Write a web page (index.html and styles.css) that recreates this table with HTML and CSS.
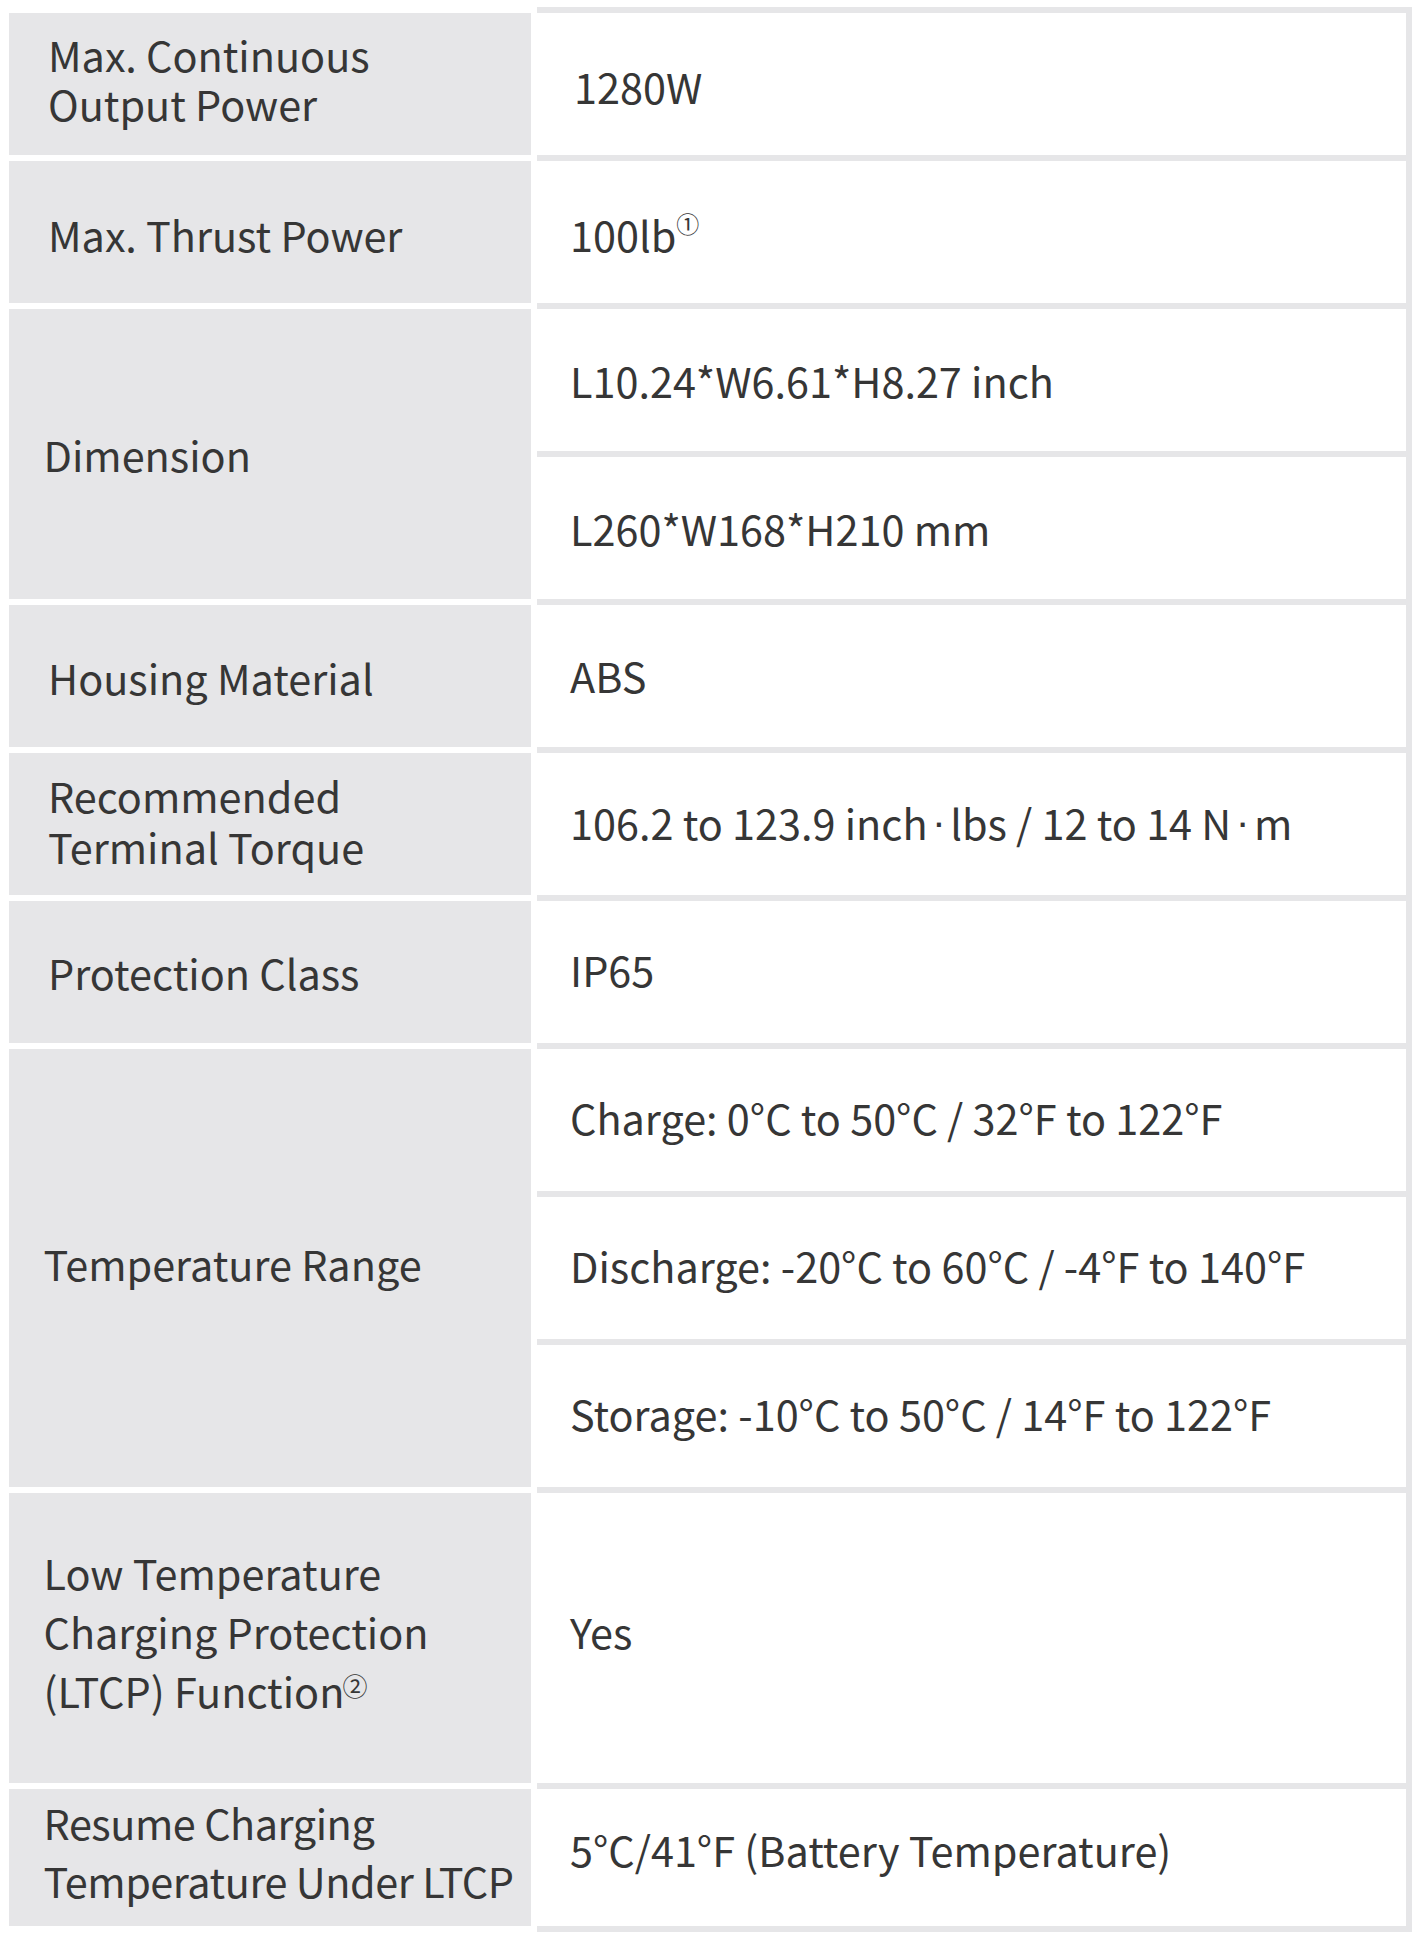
FILE: index.html
```html
<!DOCTYPE html>
<html lang="en">
<head>
<meta charset="utf-8">
<title>Specifications</title>
<link rel="stylesheet" href="styles.css">
</head>
<body>
<main class="spec">
  <div class="spec-row spec-row--first">
    <div class="spec-label label-r1"><span class="label-text lh-49">Max. Continuous<br>Output Power</span></div>
    <div class="spec-values">
      <div class="spec-value value-r1"><span class="value-text">1280W</span></div>
    </div>
  </div>

  <div class="spec-row">
    <div class="spec-label label-r2"><span class="label-text">Max. Thrust Power</span></div>
    <div class="spec-values">
      <div class="spec-value value-r2"><span class="value-text">100lb<sup class="note note-1">&#9312;</sup></span></div>
    </div>
  </div>

  <div class="spec-row">
    <div class="spec-label spec-label--b span-2"><span class="label-text">Dimension</span></div>
    <div class="spec-values">
      <div class="spec-value"><span class="value-text">L10.24*W6.61*H8.27 inch</span></div>
      <div class="spec-value"><span class="value-text">L260*W168*H210 mm</span></div>
    </div>
  </div>

  <div class="spec-row">
    <div class="spec-label label-r4"><span class="label-text">Housing Material</span></div>
    <div class="spec-values">
      <div class="spec-value value-r4"><span class="value-text">ABS</span></div>
    </div>
  </div>

  <div class="spec-row">
    <div class="spec-label label-r5"><span class="label-text lh-51">Recommended<br>Terminal Torque</span></div>
    <div class="spec-values">
      <div class="spec-value value-r5"><span class="value-text">106.2 to 123.9 inch<span class="dot">&middot;</span>lbs / 12 to 14 N<span class="dot">&middot;</span>m</span></div>
    </div>
  </div>

  <div class="spec-row">
    <div class="spec-label"><span class="label-text">Protection Class</span></div>
    <div class="spec-values">
      <div class="spec-value value-r6"><span class="value-text">IP65</span></div>
    </div>
  </div>

  <div class="spec-row">
    <div class="spec-label spec-label--b span-3 label-r7"><span class="label-text">Temperature Range</span></div>
    <div class="spec-values">
      <div class="spec-value value-temp"><span class="value-text">Charge: 0&deg;C to 50&deg;C / 32&deg;F to 122&deg;F</span></div>
      <div class="spec-value value-temp"><span class="value-text">Discharge: -20&deg;C to 60&deg;C / -4&deg;F to 140&deg;F</span></div>
      <div class="spec-value value-temp"><span class="value-text">Storage: -10&deg;C to 50&deg;C / 14&deg;F to 122&deg;F</span></div>
    </div>
  </div>

  <div class="spec-row">
    <div class="spec-label spec-label--b span-2 label-r8"><span class="label-text lh-59">Low Temperature<br>Charging Protection<br>(LTCP) Function<sup class="note note-2">&#9313;</sup></span></div>
    <div class="spec-values">
      <div class="spec-value spec-value--tall value-r8"><span class="value-text">Yes</span></div>
    </div>
  </div>

  <div class="spec-row">
    <div class="spec-label spec-label--b label-short label-r9"><span class="label-text lh-58 label-tight">Resume Charging<br>Temperature Under LTCP</span></div>
    <div class="spec-values">
      <div class="spec-value spec-value--short value-r9"><span class="value-text">5&deg;C/41&deg;F (Battery Temperature)</span></div>
    </div>
  </div>
</main>
</body>
</html>
```
FILE: styles.css
```css
html, body {
  margin: 0;
  padding: 0;
  background: #ffffff;
}

body {
  font-family: "Noto Sans CJK SC", "Noto Sans", sans-serif;
  color: #363636;
}

.spec {
  margin: 7px 0 0 9px;
  width: 1403px;
  font-size: 41.4px;
}

.spec-row {
  display: flex;
  align-items: flex-start;
  column-gap: 6px;
}

/* ---------- label column ---------- */
.spec-label {
  flex: 0 0 522px;
  box-sizing: border-box;
  height: 142px;
  padding-left: 39px;
  background: #e6e6e8;
  display: flex;
  align-items: center;
  white-space: nowrap;
}

.spec-label--b { padding-left: 34.5px; }
.span-2 { height: 290px; }
.span-3 { height: 438px; }
.label-short { height: 137px; }

.label-text {
  display: block;
  line-height: 60px;
}

.lh-49 { line-height: 49px; }
.lh-51 { line-height: 51px; }
.lh-58 { line-height: 58px; }
.lh-59 { line-height: 59px; }

.label-tight { letter-spacing: -0.45px; }

.label-r1 { padding-bottom: 11px; }
.label-r2 { padding-top: 3px; }
.label-r4 { padding-top: 1px; }
.label-r5 { padding-bottom: 7px; }
.label-r7 { padding-bottom: 10px; }
.label-r8 { padding-bottom: 14px; }
.label-r9 { padding-bottom: 13px; }

/* ---------- value column ---------- */
.spec-values {
  flex: 0 0 875px;
  box-sizing: border-box;
  border-right: 6px solid #e6e6e8;
}

.spec-row--first .spec-values { border-top: 6px solid #e6e6e8; }
.spec-row--first .spec-label { margin-top: 6px; }

.spec-value {
  box-sizing: border-box;
  height: 148px;
  padding-left: 33px;
  border-bottom: 6px solid #e6e6e8;
  display: flex;
  align-items: center;
  white-space: nowrap;
}

.value-text {
  display: block;
  line-height: 60px;
}

.spec-value--tall { height: 296px; }
.spec-value--short { height: 143px; }

.value-r1 { padding-left: 37px; padding-top: 4px; }
.value-r2 { padding-top: 4px; }
.value-r4 { padding-bottom: 2px; }
.value-r5 { padding-bottom: 4px; }
.value-r6 { padding-bottom: 7px; }
.value-temp { padding-bottom: 7px; }
.value-r8 { padding-bottom: 14px; }
.value-r9 { padding-bottom: 18px; }

.dot {
  font-family: "Liberation Sans", Arial, sans-serif;
  padding: 0 4.4px;
  vertical-align: 4px;
}

.note {
  line-height: 0;
  font-size: 23px;
}

.note-1 { vertical-align: 19px; }
.note-2 { vertical-align: 12px; font-size: 25px; margin-left: -2px; }
```
